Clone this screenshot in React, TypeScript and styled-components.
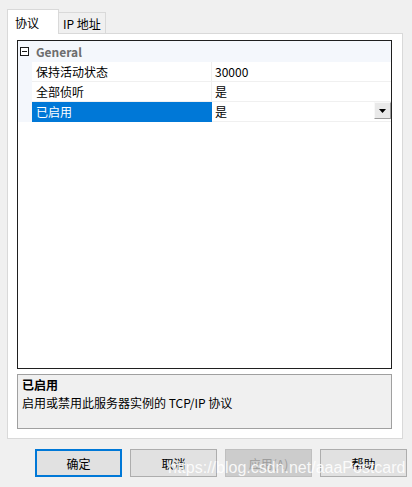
import React from "react";
import styled, { createGlobalStyle } from "styled-components";

const GlobalStyle = createGlobalStyle`
  html, body { margin: 0; padding: 0; background: #f0f0f0; }
  body {
    font-family: "Noto Sans CJK SC", "Noto Sans", sans-serif;
    font-size: 12px;
    color: #000;
  }
  * { box-sizing: border-box; }
`;

const Page = styled.div`
  position: relative;
  width: 412px;
  height: 487px;
  background: #f0f0f0;
  padding: 9px 0 0 7px;
  overflow: hidden;
`;

const TabStrip = styled.div`
  position: relative;
  z-index: 1;
  display: flex;
  align-items: flex-end;
  height: 24px;
`;

const Tab = styled.div<{ $active?: boolean }>`
  display: flex;
  align-items: center;
  height: ${(p) => (p.$active ? 25 : 21)}px;
  width: ${(p) => (p.$active ? 52 : 47)}px;
  padding-left: ${(p) => (p.$active ? 7 : 4)}px;
  margin-bottom: ${(p) => (p.$active ? -1 : 0)}px;
  background: ${(p) => (p.$active ? "#ffffff" : "#f0f0f0")};
  border: 1px solid #d9d9d9;
  border-bottom: none;
  ${(p) => (p.$active ? "" : "border-left: none;")}
  line-height: 17px;
  white-space: nowrap;
`;

const Panel = styled.div`
  width: 396px;
  height: 406px;
  background: #ffffff;
  border: 1px solid #d9d9d9;
  padding: 6px 10px 9px 9px;
  display: flex;
  flex-direction: column;
  gap: 5px;
`;

const Grid = styled.div`
  height: 329px;
  border: 1px solid #1f1f1f;
  background: #ffffff;
  display: flex;
  flex-direction: column;
`;

const CategoryRow = styled.div`
  display: flex;
  align-items: center;
  height: 21px;
  background: #f4f7fc;
  padding-left: 2px;
`;

const CollapseBox = styled.div`
  width: 9px;
  height: 9px;
  border: 1px solid #1a1a1a;
  background: #fff;
  display: flex;
  align-items: center;
  justify-content: center;
  margin-right: 7px;
  margin-top: -1px;
  &::after {
    content: "";
    width: 5px;
    height: 1px;
    background: #1a1a1a;
  }
`;

const CategoryLabel = styled.span`
  font-weight: bold;
  color: #6d6d6d;
  line-height: 17px;
`;

const PropRow = styled.div`
  display: grid;
  grid-template-columns: 14px 180px 179px;
  height: 20px;
`;

const Margin = styled.div`
  background: #f4f7fc;
`;

const NameCell = styled.div<{ $selected?: boolean }>`
  display: flex;
  align-items: center;
  padding-left: 4px;
  line-height: 17px;
  background: ${(p) => (p.$selected ? "#0078d7" : "#ffffff")};
  color: ${(p) => (p.$selected ? "#ffffff" : "#000000")};
  border-right: 1px solid ${(p) => (p.$selected ? "#0078d7" : "#f0f0f0")};
  border-bottom: 1px solid ${(p) => (p.$selected ? "#0078d7" : "#f0f0f0")};
`;

const ValueCell = styled.div`
  display: flex;
  align-items: center;
  justify-content: space-between;
  padding-left: 3px;
  line-height: 17px;
  border-bottom: 1px solid #f0f0f0;
`;

const DropButton = styled.div`
  align-self: flex-start;
  width: 17px;
  height: 17px;
  background: #e9e9e9;
  border-top: 1px solid #f8f8f8;
  border-left: 1px solid #f8f8f8;
  border-right: 1px solid #9a9a9a;
  border-bottom: 1px solid #9a9a9a;
  display: flex;
  align-items: center;
  justify-content: center;
`;

const Description = styled.div`
  height: 55px;
  border: 1px solid #a0a0a0;
  background: #f0f0f0;
  padding: 1px 4px;
  display: flex;
  flex-direction: column;
  line-height: 18px;
`;

const DescTitle = styled.div`
  font-weight: bold;
`;

const DescText = styled.div``;

const ButtonRow = styled.div`
  display: flex;
  gap: 8px;
  margin-top: 10px;
  padding-left: 28px;
`;

const Btn = styled.button<{ $default?: boolean }>`
  width: 87px;
  height: 28px;
  padding: 0;
  font-family: inherit;
  font-size: 12px;
  line-height: 17px;
  background: ${(p) => (p.disabled ? "#cccccc" : "#e1e1e1")};
  color: ${(p) => (p.disabled ? "#9d9d9d" : "#000000")};
  border: ${(p) =>
    p.$default
      ? "2px solid #0078d7"
      : p.disabled
      ? "1px solid #bfbfbf"
      : "1px solid #adadad"};
  border-radius: 0;
`;

const Watermark = styled.div`
  position: absolute;
  left: 168px;
  top: 460px;
  font-family: "Liberation Sans", Arial, sans-serif;
  font-size: 16px;
  line-height: 16px;
  color: rgba(255, 255, 255, 0.88);
  white-space: nowrap;
  pointer-events: none;
`;

const rows = [
  { name: "保持活动状态", value: "30000" },
  { name: "全部侦听", value: "是" },
  { name: "已启用", value: "是", selected: true },
];

export default function App() {
  return (
    <Page>
      <GlobalStyle />
      <TabStrip>
        <Tab $active>协议</Tab>
        <Tab>IP 地址</Tab>
      </TabStrip>
      <Panel>
        <Grid>
          <CategoryRow>
            <CollapseBox />
            <CategoryLabel>General</CategoryLabel>
          </CategoryRow>
          {rows.map((r) => (
            <PropRow key={r.name}>
              <Margin />
              <NameCell $selected={r.selected}>{r.name}</NameCell>
              <ValueCell>
                <span>{r.value}</span>
                {r.selected && (
                  <DropButton>
                    <svg width="7" height="4" viewBox="0 0 7 4">
                      <polygon points="0,0 7,0 3.5,4" fill="#000" />
                    </svg>
                  </DropButton>
                )}
              </ValueCell>
            </PropRow>
          ))}
        </Grid>
        <Description>
          <DescTitle>已启用</DescTitle>
          <DescText>启用或禁用此服务器实例的 TCP/IP 协议</DescText>
        </Description>
      </Panel>
      <ButtonRow>
        <Btn $default>确定</Btn>
        <Btn>取消</Btn>
        <Btn disabled>应用(A)</Btn>
        <Btn>帮助</Btn>
      </ButtonRow>
      <Watermark>https://blog.csdn.net/aaaPostcard</Watermark>
    </Page>
  );
}
